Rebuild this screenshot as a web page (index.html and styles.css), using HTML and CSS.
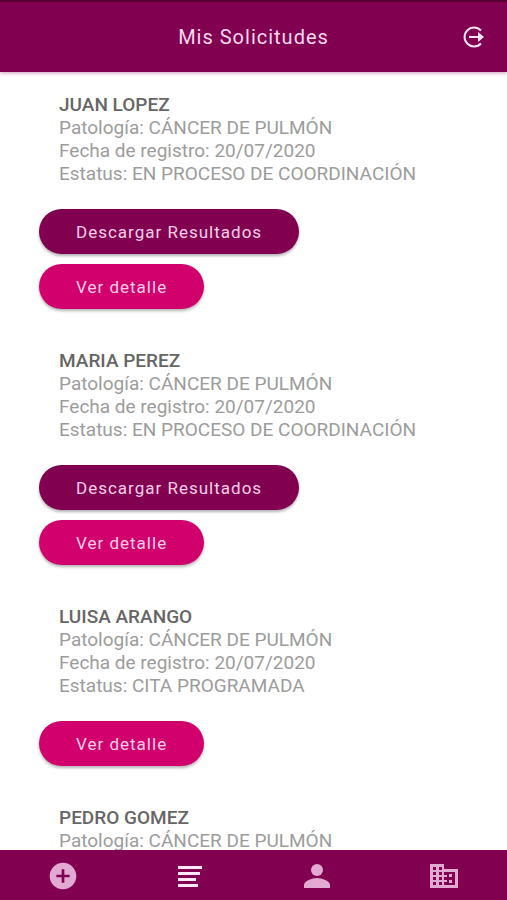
FILE: index.html
```html
<!DOCTYPE html>
<html lang="es">
<head>
    <meta charset="UTF-8">
    <meta name="viewport" content="width=device-width, initial-scale=1.0">
    <title>Mis Solicitudes</title>
    <link rel="stylesheet" href="styles.css">
</head>
<body>
    <header class="toolbar">
        <h1>Mis Solicitudes</h1>
        <button class="logout" type="button" aria-label="Cerrar sesión">
            <svg viewBox="0 0 24 24" width="24" height="24">
                <path d="M20 5.500A9.500 9.500 0 1 0 20 18.500" fill="none" stroke="currentColor" stroke-width="2"/>
                <path d="M8 11h9V7l6 5-6 5v-4H8z" fill="currentColor"/>
            </svg>
        </button>
    </header>

    <main class="content">
        <section class="request">
            <div class="info">
                <h2>JUAN LOPEZ</h2>
                <p>Patología: CÁNCER DE PULMÓN</p>
                <p>Fecha de registro: 20/07/2020</p>
                <p>Estatus: EN PROCESO DE COORDINACIÓN</p>
            </div>
            <button class="btn btn-primary" type="button">Descargar Resultados</button>
            <button class="btn btn-secondary" type="button">Ver detalle</button>
        </section>

        <section class="request">
            <div class="info">
                <h2>MARIA PEREZ</h2>
                <p>Patología: CÁNCER DE PULMÓN</p>
                <p>Fecha de registro: 20/07/2020</p>
                <p>Estatus: EN PROCESO DE COORDINACIÓN</p>
            </div>
            <button class="btn btn-primary" type="button">Descargar Resultados</button>
            <button class="btn btn-secondary" type="button">Ver detalle</button>
        </section>

        <section class="request">
            <div class="info">
                <h2>LUISA ARANGO</h2>
                <p>Patología: CÁNCER DE PULMÓN</p>
                <p>Fecha de registro: 20/07/2020</p>
                <p>Estatus: CITA PROGRAMADA</p>
            </div>
            <button class="btn btn-secondary" type="button">Ver detalle</button>
        </section>

        <section class="request">
            <div class="info">
                <h2>PEDRO GOMEZ</h2>
                <p>Patología: CÁNCER DE PULMÓN</p>
            </div>
        </section>
    </main>

    <nav class="tabs">
        <a href="#nueva" aria-label="Nueva solicitud">
            <svg viewBox="0 0 24 24" width="34" height="32">
                <path d="M12 2C6.480 2 2 6.480 2 12s4.480 10 10 10 10-4.480 10-10S17.520 2 12 2zm5 11h-4v4h-2v-4H7v-2h4V7h2v4h4v2z"/>
            </svg>
        </a>
        <a class="active" href="#solicitudes" aria-label="Mis solicitudes">
            <svg viewBox="0 0 24 22" width="24" height="22">
                <path d="M0 1h24v3H0zM0 7h22v3H0zM0 13h18v3H0zM0 19h20v3H0z"/>
            </svg>
        </a>
        <a href="#perfil" aria-label="Perfil">
            <svg viewBox="0 0 26 24" width="26" height="24">
                <circle cx="13" cy="6" r="6"/>
                <path d="M0 24v-3c0-4 8-7 13-7s13 3 13 7v3z"/>
            </svg>
        </a>
        <a href="#centros" aria-label="Centros">
            <svg viewBox="0 0 28 24" width="28" height="24">
                <path fill-rule="evenodd" d="M0 0h14v5h14v19H0zM3 3v3h3V3zM9 3v3h3V3zM3 8v3h3V8zM9 8v3h3V8zM3 13v3h3v-3zM9 13v3h3v-3zM3 18v3h3v-3zM9 18v3h3v-3zM14 8v3h3v2h-3v3h3v2h-3v3h11V8zM19 10h3v3h-3zM19 16h3v3h-3z"/>
            </svg>
        </a>
    </nav>
</body>
</html>
```
FILE: styles.css
```css
* {
    box-sizing: border-box;
}
body {
    display: flex;
    flex-direction: column;
    height: 100vh;
    margin: 0;
    background-color: #fff;
    color: #9c9c9c;
    font-family: Roboto, "Liberation Sans", sans-serif;
    font-size: 19px;
    line-height: 23px;
}
h1, h2, p {
    margin: 0;
}
.toolbar {
    display: grid;
    grid-template-columns: 1fr auto 1fr;
    align-items: center;
    flex: none;
    height: 72px;
    padding: 0 22px;
    border-top: 2px solid #5c0038;
    background-color: #820050;
    color: #fbd9ef;
    box-shadow: 0 1px 4px rgba(130, 0, 80, 0.4);
    z-index: 1;
}
.toolbar h1 {
    grid-column: 2;
    font-size: 20px;
    font-weight: 400;
    letter-spacing: 1px;
}
.logout {
    justify-self: end;
    display: flex;
    padding: 0;
    border: none;
    background: none;
    color: #ffe6f8;
    cursor: pointer;
}
.content {
    flex: 1;
    min-height: 0;
    overflow-y: auto;
    scrollbar-width: none;
    padding: 21px 39px 0;
}
.request {
    display: flex;
    flex-direction: column;
    align-items: flex-start;
    gap: 10px;
    margin-bottom: 40px;
}
.info {
    padding: 0 20px;
    margin-bottom: 14px;
}
.info h2 {
    color: #666;
    font-size: 19px;
    font-weight: 500;
}
.btn {
    height: 45px;
    padding: 0 37px;
    border: none;
    border-radius: 23px;
    color: #fbd0e8;
    font-family: inherit;
    font-size: 17px;
    letter-spacing: 1px;
    box-shadow: 0 2px 3px rgba(0, 0, 0, 0.3);
    cursor: pointer;
}
.btn-primary {
    background-color: #820050;
}
.btn-secondary {
    background-color: #d1006c;
}
.tabs {
    display: flex;
    flex: none;
    height: 50px;
    padding-top: 2px;
    background-color: #820050;
}
.tabs a {
    display: flex;
    flex: 1;
    align-items: center;
    justify-content: center;
    color: #e2a9d2;
}
.tabs .active {
    color: #ffe6f8;
}
.tabs svg {
    fill: currentColor;
}
```
